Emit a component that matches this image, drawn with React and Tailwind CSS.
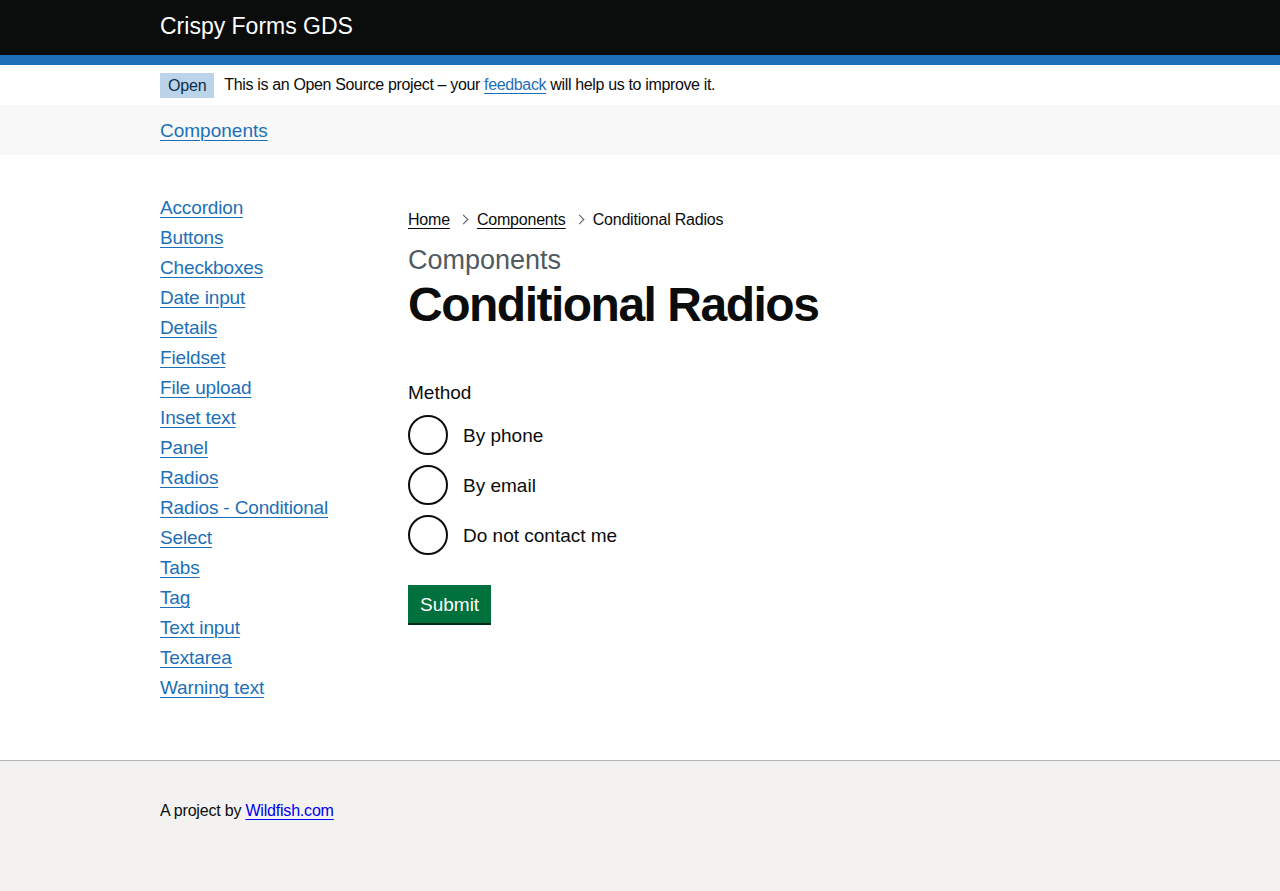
import React from 'react';

const sideLinks = [
  'Accordion',
  'Buttons',
  'Checkboxes',
  'Date input',
  'Details',
  'Fieldset',
  'File upload',
  'Inset text',
  'Panel',
  'Radios',
  'Radios - Conditional',
  'Select',
  'Tabs',
  'Tag',
  'Text input',
  'Textarea',
  'Warning text',
];

const radios = ['By phone', 'By email', 'Do not contact me'];

const linkCls = 'text-[#1d70b8] underline decoration-1 underline-offset-[3px]';

const Chevron = () => (
  <span className="mx-[10px] inline-block h-[7px] w-[7px] rotate-45 border-t border-r border-[#505a5f] align-middle -translate-y-[1px]" />
);

export default function App() {
  return (
    <div className="min-h-[891px] flex flex-col bg-white text-[#0b0c0c]" style={{ fontFamily: '"Liberation Sans", Arial, sans-serif' }}>
      {/* header */}
      <header className="bg-[#0b0c0c]">
        <div className="mx-auto w-[960px] h-[55px] flex items-center">
          <span className="text-white text-[23px] leading-none -translate-y-[1px]">Crispy Forms GDS</span>
        </div>
        <div className="h-[10px] bg-[#1d70b8]" />
      </header>

      {/* phase banner */}
      <div className="mx-auto w-[960px] h-[40px] flex items-center">
        <span className="bg-[#bbd4ea] text-[#0c2d4a] text-[16px] leading-[25px] h-[25px] px-[8px] tracking-[-0.2px]">Open</span>
        <span className="ml-[10px] text-[16px] leading-[20px] tracking-[-0.35px]">
          This is an Open Source project – your <a href="#" className={linkCls}>feedback</a> will help us to improve it.
        </span>
      </div>

      {/* nav */}
      <div className="bg-[#f8f8f8] h-[50px]">
        <div className="mx-auto w-[960px] h-full flex items-center">
          <a href="#" className={`${linkCls} text-[19px] leading-[25px]`}>Components</a>
        </div>
      </div>

      {/* main */}
      <main className="mx-auto w-[960px] flex pt-[40px] pb-[55px]">
        <nav className="w-[248px] shrink-0">
          <ul>
            {sideLinks.map((l) => (
              <li key={l} className="mb-[5px] text-[19px] leading-[25px] tracking-[-0.15px]">
                <a href="#" className={linkCls}>{l}</a>
              </li>
            ))}
          </ul>
        </nav>

        <div className="flex-1">
          <div className="mt-[15px] text-[16px] leading-[20px] flex items-center tracking-[-0.2px]">
            <a href="#" className="underline decoration-1 underline-offset-[3px]">Home</a>
            <Chevron />
            <a href="#" className="underline decoration-1 underline-offset-[3px]">Components</a>
            <Chevron />
            <span>Conditional Radios</span>
          </div>

          <div className="mt-[15px] text-[#505a5f] text-[27px] leading-[30px]">Components</div>
          <h1 className="mt-[5px] text-[48px] leading-[50px] font-bold tracking-[-1.5px]">Conditional Radios</h1>

          <form className="mt-[50px]">
            <div className="text-[19px] leading-[25px] mb-[10px]">Method</div>
            <div className="flex flex-col gap-[10px]">
              {radios.map((r) => (
                <label key={r} className="flex items-center">
                  <span className="w-[40px] h-[40px] rounded-full border-2 border-[#0b0c0c] bg-white shrink-0" />
                  <span className="ml-[15px] text-[19px] leading-[25px]">{r}</span>
                </label>
              ))}
            </div>
            <button
              type="button"
              className="mt-[30px] bg-[#00703c] text-white text-[19px] leading-[19px] pt-[10px] pb-[9px] px-[12px] shadow-[0_2px_0_#002d18]"
            >
              Submit
            </button>
          </form>
        </div>
      </main>

      {/* footer */}
      <footer className="flex-1 border-t border-[#b1b4b6] bg-[#f3f2f1] pt-[40px] pb-[60px]">
        <div className="mx-auto w-[960px] text-[16px] leading-[20px] tracking-[-0.2px]">
          A project by <a href="#" className="text-[#0000ee] underline decoration-1 underline-offset-[3px]">Wildfish.com</a>
        </div>
      </footer>
    </div>
  );
}
